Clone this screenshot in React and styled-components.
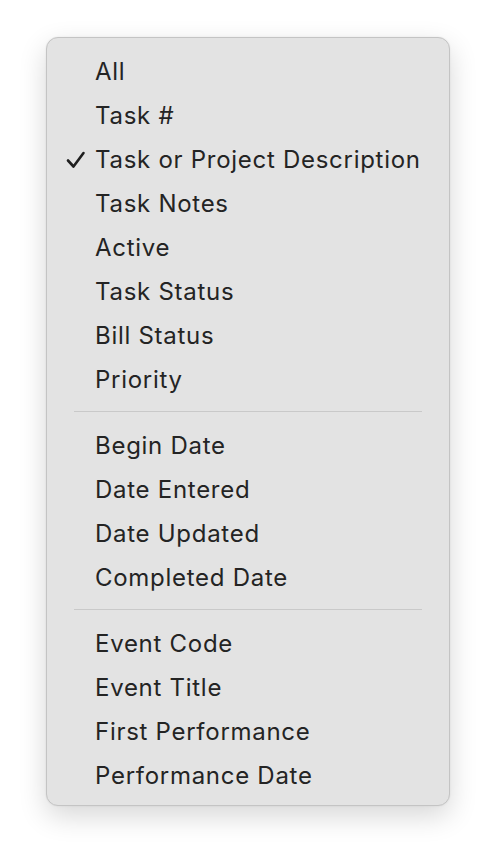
import styled, { createGlobalStyle } from "styled-components";

const GlobalStyle = createGlobalStyle`
    html, body {
        margin: 0;
        padding: 0;
        background: #ffffff;
    }
    body {
        font-family: Inter, "Noto Sans", sans-serif;
        -webkit-font-smoothing: antialiased;
    }
`;

const groups = [
    ["All", "Task #", "Task or Project Description", "Task Notes", "Active", "Task Status", "Bill Status", "Priority"],
    ["Begin Date", "Date Entered", "Date Updated", "Completed Date"],
    ["Event Code", "Event Title", "First Performance", "Performance Date"],
];

const selected = "Task or Project Description";

const CheckIcon = () => (
    <svg width="20" height="18" viewBox="0 0 20 18" fill="none">
        <path d="M2 9.5 L7.5 15.5 L17.5 2" stroke="#1f1f1f" strokeWidth="2.6" strokeLinecap="round" strokeLinejoin="round" />
    </svg>
);

const App = () => {
    return (
        <>
            <GlobalStyle />
            <StyledPage>
                <StyledMenu>
                    {groups.map((group, gi) => (
                        <div key={gi}>
                            {gi > 0 && <StyledSeparator />}
                            {group.map((label) => (
                                <StyledItem key={label}>
                                    <StyledCheck>{label === selected && <CheckIcon />}</StyledCheck>
                                    <StyledLabel>{label}</StyledLabel>
                                </StyledItem>
                            ))}
                        </div>
                    ))}
                </StyledMenu>
            </StyledPage>
        </>
    );
};

export default App;

const StyledPage = styled.div`
    width: 496px;
    height: 860px;
    padding: 37px 0 0 46px;
    box-sizing: border-box;
`;

const StyledMenu = styled.div`
    width: 404px;
    height: 769px;
    box-sizing: border-box;
    padding: 11px 0 9px;
    background: #e3e3e3;
    border: 1px solid #c4c4c4;
    border-radius: 12px;
    box-shadow: 0 10px 28px rgba(0, 0, 0, 0.16), 0 0 2px rgba(0, 0, 0, 0.08);
`;

const StyledItem = styled.div`
    display: flex;
    align-items: center;
    height: 44px;
`;

const StyledCheck = styled.span`
    width: 48px;
    display: flex;
    justify-content: flex-end;
    padding-right: 9px;
    box-sizing: border-box;
    padding-top: 1px;
`;

const StyledLabel = styled.span`
    font-size: 24px;
    color: #242424;
    letter-spacing: 0.72px;
`;

const StyledSeparator = styled.div`
    height: 1px;
    margin: 10px 27px 11px;
    background: #c9c9c9;
`;
